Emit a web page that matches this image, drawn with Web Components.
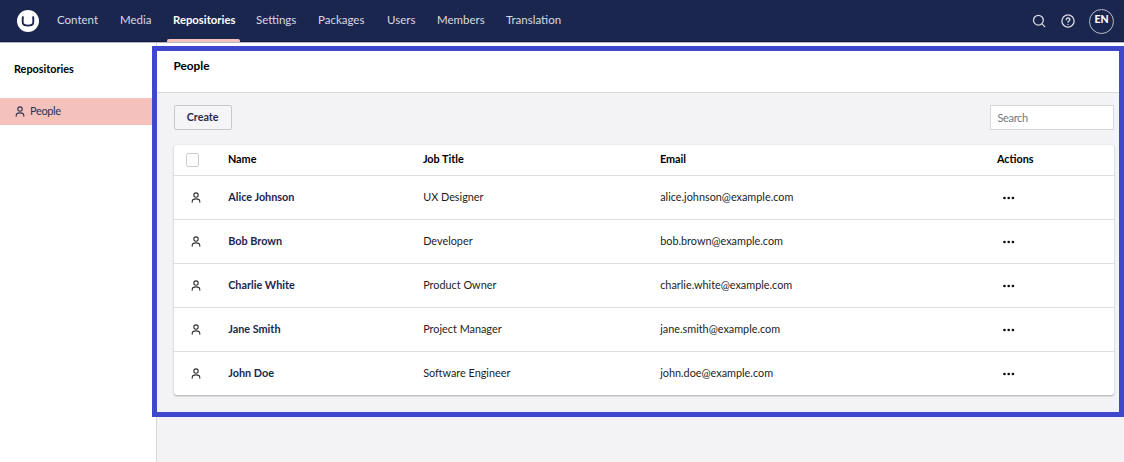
<!DOCTYPE html>
<html lang="en">
<head>
<meta charset="utf-8">
<title>People</title>
<style>
html,body{margin:0;height:100%;overflow:hidden}
body{font-family:Lato,sans-serif;font-size:10.850px;color:#1d1d1d;background:#f3f3f5}
</style>
</head>
<body>
<app-shell></app-shell>
<script>
const define = (name, html, setup) => customElements.define(name, class extends HTMLElement {
  connectedCallback() {
    if (this.shadowRoot) return;
    this.attachShadow({mode: 'open'}).innerHTML = '<style>*{box-sizing:border-box}</style>' + (typeof html === 'function' ? html(this) : html);
    if (setup) setup(this);
  }
});

define('user-icon', `<style>:host{display:block;width:10px;height:11px}svg{display:block}</style>
<svg width="10" height="11" viewBox="0 0 10 11" fill="none" stroke="currentColor" stroke-width="1.1" stroke-linecap="round"><circle cx="5" cy="3.1" r="2.2"/><path d="M1.2 10.2V9.6C1.2 7.8 2.7 6.9 5 6.9S8.8 7.8 8.8 9.6v.6"/></svg>`);

define('nav-item', el => `<style>
:host{display:block;height:42px;position:relative;color:#d8dae3;font-size:11.5px;line-height:40px;white-space:nowrap;width:${el.getAttribute('w')}px}
:host([active]){color:#fff;font-weight:700;font-size:11.3px}
:host([active])::after{content:"";position:absolute;left:-6px;right:-6px;bottom:0;height:3px;background:#f5c1bc;border-radius:2px 2px 0 0}
</style><slot></slot>`);

define('app-header', `<style>
:host{display:flex;height:42px;background:#1b264f;flex:none;padding-left:16.500px;padding-right:10px;box-shadow:inset 0 -1px #141b41,0 1px #b4b7c8;align-items:center;position:relative}
.logo{width:22px;height:22px;margin:0 18.500px 1px 0;flex:none}
nav{display:flex}
.end{margin-left:auto;display:flex;align-items:center}
.av{width:25px;height:25px;border:1.5px solid #b9bdca;border-radius:50%;color:#fff;font-weight:900;font-size:10.500px;line-height:19px;text-align:center;margin-left:14.500px}
svg{display:block}
</style>
<svg class="logo" viewBox="0 0 22 22"><circle cx="11" cy="11" r="11" fill="#fff"/><path d="M5.9 6.300C5.200 14.200 5.500 15.600 11 15.600s5.800-1.400 5.100-9.300" fill="none" stroke="#1b264f" stroke-width="1.9"/></svg>
<nav><nav-item w="63">Content</nav-item><nav-item w="53">Media</nav-item><nav-item w="61" active>Repositories</nav-item><nav-item w="62" style="margin-left:22px">Settings</nav-item><nav-item w="69">Packages</nav-item><nav-item w="50">Users</nav-item><nav-item w="69">Members</nav-item><nav-item w="56">Translation</nav-item></nav>
<div class="end">
<svg width="14" height="14" viewBox="0 0 14 14" fill="none" stroke="#d8dae3" stroke-width="1.3" stroke-linecap="round"><circle cx="6.4" cy="6.2" r="4.9"/><path d="M10 9.9l2.7 2.7"/></svg>
<svg style="margin-left:15px" width="14" height="14" viewBox="0 0 14 14" fill="none" stroke="#d8dae3" stroke-width="1.3" stroke-linecap="round"><circle cx="7" cy="7" r="6.1"/><path d="M5.2 5.5c.2-1 .9-1.5 1.8-1.5 1.1 0 1.9.7 1.9 1.6C8.9 6.900 7 7 7 8.200M7 10.300v.1"/></svg>
<div class="av">EN</div></div>`);

define('side-bar', `<style>
:host{display:block;width:157px;flex:none;background:#fff;border-right:1px solid #d8d7d9}
h2{margin:0;height:56px;padding:0 14px;line-height:54px;font-size:10.850px;font-weight:700;color:#000}
.item{height:27px;background:#f5c1bc;display:flex;align-items:center;padding:0 0 1px 15px;color:#2c3350;font-size:11px;letter-spacing:-.36px}
user-icon{margin:0 5px 0 0}
span{margin-top:-2px}
</style><h2>Repositories</h2><div class="item"><user-icon></user-icon><span>People</span></div>`);

define('people-row', el => `<style>
:host{display:grid;grid-template-columns:54.600px 195px 237px 337px 1fr;height:44px;border-bottom:1px solid #dedee0;align-items:center;color:#1d1d1d}
:host(:last-child){border-bottom-color:transparent}
user-icon{margin:0 0 0 17px;color:#303033}
b,span{margin-top:-2px}
b{color:#1b264f}
svg{display:block;margin:1px 0 0 5px}
</style><user-icon></user-icon><b>${el.getAttribute('name')}</b><span>${el.getAttribute('job')}</span><span>${el.getAttribute('email')}</span>
<svg width="14" height="4" viewBox="0 0 14 4" fill="#111"><circle cx="2.500" cy="2" r="1.350"/><circle cx="6.700" cy="2" r="1.350"/><circle cx="10.900" cy="2" r="1.350"/></svg>`);

define('people-table', `<style>
:host{display:block;background:#fff;border-radius:2.500px;box-shadow:0 1px 2px rgba(0,0,0,.28),0 0 1px rgba(0,0,0,.16);height:250px}
.head{display:grid;grid-template-columns:54.300px 195px 237px 337px 1fr;height:31px;border-bottom:1px solid #dedee0;align-items:center;font-weight:700;color:#000;padding-bottom:1px}
.head span{margin-top:-2px}
i{width:13px;height:14px;border:1px solid #cfced1;border-radius:2px;margin:1px 0 0 12px}
</style><div class="head"><i></i><span>Name</span><span>Job Title</span><span>Email</span><span>Actions</span></div><slot></slot>`);

define('people-view', `<style>
:host{display:flex;flex-direction:column;flex:1;min-width:0}
header{height:51px;background:#fff;border-bottom:1px solid #d8d7d9;padding-left:16.500px;line-height:48px;font-weight:700;font-size:11.800px;color:#000}
.body{padding:12px 10.500px 0 16.600px}
.tools{display:flex;justify-content:space-between;height:40px}
button{width:58px;height:25px;border:1px solid #c9c9cc;border-radius:2px;background:#f5f5f7;font:700 10.700px Lato,sans-serif;color:#262c46;padding:0 0 2px}
.search{width:124px;height:25px;border:1px solid #d8d7d9;background:#fff;color:#77777c;line-height:23px;padding-left:7px;font-size:11px;letter-spacing:-.36px}
</style><header>People</header><div class="body"><div class="tools"><button>Create</button><div class="search">Search</div></div>
<people-table>
<people-row name="Alice Johnson" job="UX Designer" email="alice.johnson@example.com"></people-row>
<people-row name="Bob Brown" job="Developer" email="bob.brown@example.com"></people-row>
<people-row name="Charlie White" job="Product Owner" email="charlie.white@example.com"></people-row>
<people-row name="Jane Smith" job="Project Manager" email="jane.smith@example.com"></people-row>
<people-row name="John Doe" job="Software Engineer" email="john.doe@example.com"></people-row>
</people-table></div>`);

define('focus-frame', `<style>:host{position:absolute;left:152px;top:46px;right:0;bottom:45px;box-sizing:border-box;border:5px solid #3f48cc;pointer-events:none}</style>`);

define('app-shell', `<style>
:host{display:flex;flex-direction:column;height:100vh;position:relative}
main{display:flex;flex:1;min-height:0}
</style><app-header></app-header><main><side-bar></side-bar><people-view></people-view></main><focus-frame></focus-frame>`);
</script>
</body>
</html>
